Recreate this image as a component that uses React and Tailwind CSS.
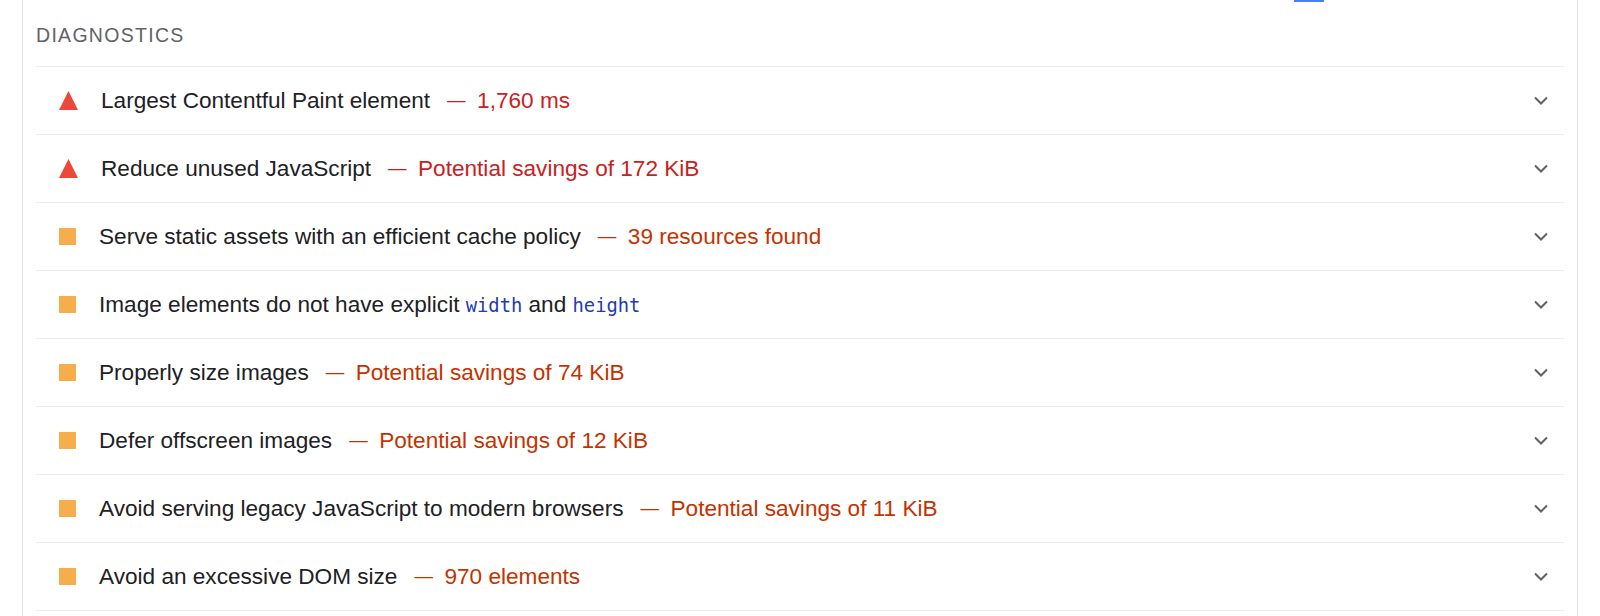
const audits = [
  { level: "fail", title: "Largest Contentful Paint element", value: "1,760 ms" },
  { level: "fail", title: "Reduce unused JavaScript", value: "Potential savings of 172 KiB" },
  { level: "average", title: "Serve static assets with an efficient cache policy", value: "39 resources found" },
  {
    level: "average",
    title: (
      <>
        Image elements do not have explicit <Code>width</Code> and <Code>height</Code>
      </>
    ),
  },
  { level: "average", title: "Properly size images", value: "Potential savings of 74 KiB" },
  { level: "average", title: "Defer offscreen images", value: "Potential savings of 12 KiB" },
  {
    level: "average",
    title: "Avoid serving legacy JavaScript to modern browsers",
    value: "Potential savings of 11 KiB",
  },
  { level: "average", title: "Avoid an excessive DOM size", value: "970 elements" },
];

function Code({ children }) {
  return (
    <code className="font-['DejaVu_Sans_Mono','Liberation_Mono',monospace] text-[18.8px] text-[#2339b5]">
      {children}
    </code>
  );
}

function StatusIcon({ level }) {
  if (level === "fail") {
    return (
      <svg width="19" height="19" viewBox="0 0 19 19" className="shrink-0">
        <polygon points="9.5,0 19,19 0,19" fill="#eb473b" />
      </svg>
    );
  }
  return <span className="block w-[17px] h-[17px] shrink-0 bg-[#f5ae4b]" />;
}

function Chevron() {
  return (
    <svg width="14" height="9" viewBox="0 0 14 9" className="shrink-0">
      <polyline points="1,1.5 7,7.5 13,1.5" fill="none" stroke="#616161" strokeWidth="2" />
    </svg>
  );
}

function AuditRow({ audit }) {
  const valueColor = audit.level === "fail" ? "text-[#c7221f]" : "text-[#c33300]";
  return (
    <div className="flex items-center h-[68px] border-t border-[#ebebeb] pl-[23px] pr-[16px]">
      <div className="flex items-center gap-[23px] flex-1 min-w-0">
        <StatusIcon level={audit.level} />
        <div className="flex items-baseline whitespace-nowrap">
          <span className="text-[#202124]">{audit.title}</span>
          {audit.value && (
            <span className={`ml-[17px] ${valueColor}`}>
              <span className="text-[18.5px] mr-[11.5px] align-[2px]">—</span>
              {audit.value}
            </span>
          )}
        </div>
      </div>
      <Chevron />
    </div>
  );
}

export default function App() {
  return (
    <div className="bg-white px-[22px] h-[616px] overflow-hidden font-['Liberation_Sans',Arial,sans-serif]">
      <div className="h-full border-x border-[#e8e8e8] px-[13px]">
        <div className="h-[2px] w-[30px] ml-[1258px] bg-[#4a7dfc]" />
        <div className="pt-[21px] pb-[19px] leading-[24px] text-[19.5px] tracking-[1.3px] text-[#5f6368]">
          DIAGNOSTICS
        </div>
        <div className="border-b border-[#ebebeb] text-[22.6px]">
          {audits.map((audit, i) => (
            <AuditRow key={i} audit={audit} />
          ))}
        </div>
      </div>
    </div>
  );
}
